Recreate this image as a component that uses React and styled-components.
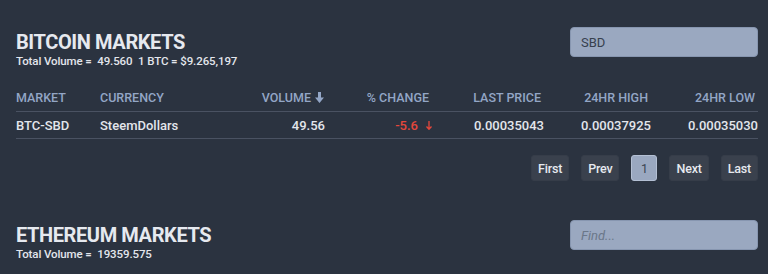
import React from "react";
import styled, { createGlobalStyle } from "styled-components";

const Global = createGlobalStyle`
  html, body { margin: 0; padding: 0; background: #2b3340; }
  body { font-family: Roboto, "Liberation Sans", sans-serif; color: #e3e6ec; }
`;

const Page = styled.div`
  padding: 0 10px 0 16px;
`;

const Section = styled.section`
  padding-top: ${(p) => p.$top}px;
`;

const Header = styled.div`
  display: flex;
  justify-content: space-between;
  align-items: flex-start;
`;

const TitleBlock = styled.div`
  padding-top: 3px;
`;

const Title = styled.h2`
  margin: 0;
  font-size: 20px;
  line-height: 24px;
  font-weight: 700;
  color: #e6e9ef;
  letter-spacing: -0.4px;
`;

const Sub = styled.div`
  font-size: 11.5px;
  line-height: 13px;
  font-weight: 500;
  color: #e3e6ec;
  letter-spacing: -0.1px;
  margin-top: 1px;
`;

const Search = styled.input`
  box-sizing: border-box;
  width: 188px;
  height: 30px;
  border: 1px solid #8796b0;
  border-radius: 4px;
  background: #9aa8c0;
  padding: 0 10px;
  font-family: Roboto, "Liberation Sans", sans-serif;
  font-size: 13px;
  color: #37404e;
  outline: none;
  &::placeholder {
    color: #6a7789;
    font-style: italic;
  }
`;

const cols = "84px 125px 100px 107px 112px 107px 107px";

const Table = styled.div`
  margin-top: 16px;
`;

const Row = styled.div`
  display: grid;
  grid-template-columns: ${cols};
  align-items: center;
  height: ${(p) => p.$h}px;
  border-bottom: 1px solid #4a5262;
`;

const Th = styled.div`
  font-size: 12.5px;
  font-weight: 500;
  color: #93a6c6;
  padding-right: ${(p) => (p.$right && !p.$sorted ? 3 : 0)}px;
  display: flex;
  align-items: center;
  justify-content: ${(p) => (p.$right ? "flex-end" : "flex-start")};
  gap: 3px;
`;

const Td = styled.div`
  font-size: 13px;
  font-weight: 500;
  color: ${(p) => (p.$neg ? "#e5473b" : "#e3e6ec")};
  display: flex;
  align-items: center;
  justify-content: ${(p) => (p.$right ? "flex-end" : "flex-start")};
  gap: 8px;
`;

const Pager = styled.div`
  display: flex;
  justify-content: flex-end;
  gap: 12px;
  margin-top: 16px;
`;

const PageBtn = styled.button`
  box-sizing: border-box;
  height: 26px;
  min-width: 26px;
  padding: 0 ${(p) => (p.$active ? 0 : 6)}px;
  border-radius: 3px;
  border: 1px solid ${(p) => (p.$active ? "#b4c0d4" : "#363d49")};
  background: ${(p) => (p.$active ? "#9aa8c0" : "#3a414d")};
  color: ${(p) => (p.$active ? "#3b4452" : "#e6e9ef")};
  font-family: Roboto, "Liberation Sans", sans-serif;
  font-size: 12.5px;
  font-weight: ${(p) => (p.$active ? 400 : 500)};
  letter-spacing: -0.2px;
  cursor: pointer;
`;

const SortArrow = () => (
  <svg width="11" height="11" viewBox="0 0 11 11">
    <path d="M4 0h3v5.5h3L5.5 11 1 5.5h3z" fill="#93a6c6" />
  </svg>
);

const ThinDown = () => (
  <svg width="6" height="9" viewBox="0 0 6 9">
    <path d="M3 0v8M0.5 5.5L3 8.3 5.5 5.5" stroke="#e5473b" strokeWidth="1.3" fill="none" />
  </svg>
);

export default function App() {
  return (
    <Page>
      <Global />
      <Section $top={27}>
        <Header>
          <TitleBlock>
            <Title>BITCOIN MARKETS</Title>
            <Sub>Total Volume =&nbsp; 49.560&nbsp; 1 BTC = $9.265,197</Sub>
          </TitleBlock>
          <Search defaultValue="SBD" />
        </Header>
        <Table>
          <Row $h={27}>
            <Th>MARKET</Th>
            <Th>CURRENCY</Th>
            <Th $right $sorted>
              VOLUME <SortArrow />
            </Th>
            <Th $right>% CHANGE</Th>
            <Th $right>LAST PRICE</Th>
            <Th $right>24HR HIGH</Th>
            <Th $right>24HR LOW</Th>
          </Row>
          <Row $h={26}>
            <Td>BTC-SBD</Td>
            <Td>SteemDollars</Td>
            <Td $right>49.56</Td>
            <Td $right $neg>
              -5.6 <ThinDown />
            </Td>
            <Td $right>0.00035043</Td>
            <Td $right>0.00037925</Td>
            <Td $right>0.00035030</Td>
          </Row>
        </Table>
        <Pager>
          <PageBtn>First</PageBtn>
          <PageBtn>Prev</PageBtn>
          <PageBtn $active>1</PageBtn>
          <PageBtn>Next</PageBtn>
          <PageBtn>Last</PageBtn>
        </Pager>
      </Section>
      <Section $top={39}>
        <Header>
          <TitleBlock>
            <Title>ETHEREUM MARKETS</Title>
            <Sub>Total Volume =&nbsp; 19359.575</Sub>
          </TitleBlock>
          <Search placeholder="Find..." />
        </Header>
      </Section>
    </Page>
  );
}
